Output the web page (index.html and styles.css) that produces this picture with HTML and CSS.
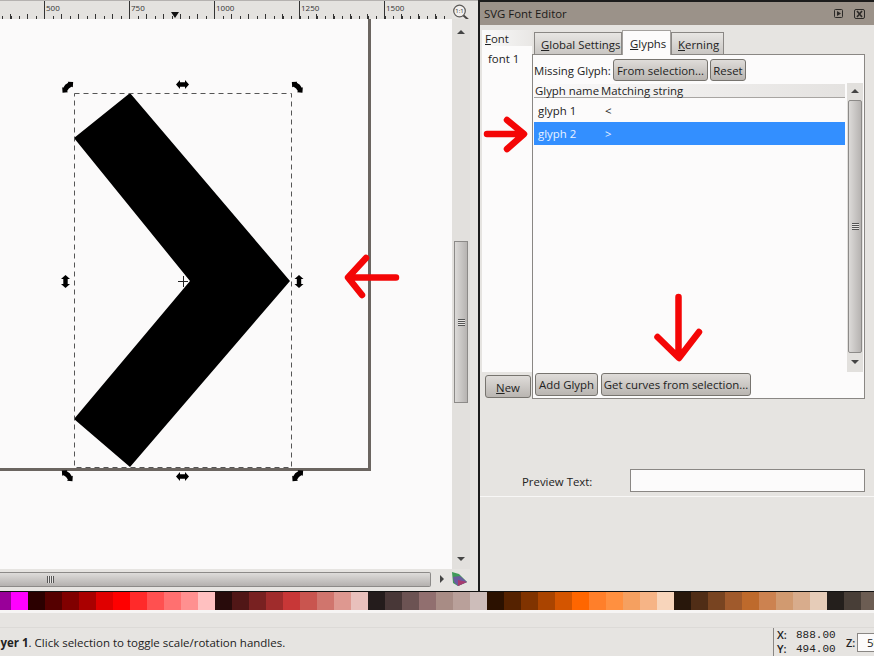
FILE: index.html

```html
<!DOCTYPE html>
<html lang="en">
<head>
  <meta charset="UTF-8" />
  <title>SVG Font Editor</title>
  <link rel="stylesheet" href="styles.css">
</head>
<body>
  <div class="app">
    <div class="work">
      <div class="left">
        <div class="ruler-row">
          <div class="ruler">
            <span class="ruler-lead"></span>
            <span class="ruler-cell">500</span>
            <span class="ruler-cell">750</span>
            <span class="ruler-cell">1000</span>
            <span class="ruler-cell">1250</span>
            <span class="ruler-cell">1500</span>
            <i class="ruler-mark"></i>
          </div>
          <svg class="zoom-icon" width="26" height="19" viewBox="0 0 26 19">
            <circle cx="7.5" cy="10" r="5.8" fill="#f2f0ee" stroke="#5c5a58" stroke-width="1.2"/>
            <path d="M11.5 14.5 L16 18.5" stroke="#4a4846" stroke-width="2"/>
            <text x="7.5" y="12.2" text-anchor="middle" class="zoom-text">1:1</text>
          </svg>
        </div>
        <div class="canvas-row">
          <div class="canvas">
            <svg width="452" height="550" viewBox="0 19 452 550">
              <defs>
                <path id="handle" d="M-6.5 0 L-2.5 -4.5 L-2.5 -2.2 L2.5 -2.2 L2.5 -4.5 L6.5 0 L2.5 4.5 L2.5 2.2 L-2.5 2.2 L-2.5 4.5Z" fill="#000"/>
                <path id="corner" d="M-7.5 0.5 L-4 -3.5 L-3.5 -2.5 Q0 -4 3.5 -2.5 L4 -3.5 L7.5 0.5 L3.5 4 L3 2.5 Q0 1.5 -3 2.5 L-3.5 4Z" fill="#000"/>
              </defs>
              <path d="M0 469.5 H369.5 V19" fill="none" stroke="#6b6560" stroke-width="3"/>
              <polygon points="130,93 290,281 130,467 74,419 190,281 74,138" fill="#000"/>
              <rect x="74.5" y="93.5" width="217" height="374" fill="none" stroke="#555" stroke-dasharray="5 4"/>
              <path d="M178 281.5 H188 M183.5 276 V287" stroke="#222" stroke-width="1"/>
              <use href="#corner" transform="translate(67.5 87) rotate(-45)"/>
              <use href="#handle" transform="translate(182.5 84.5)"/>
              <use href="#corner" transform="translate(297.5 87) rotate(45)"/>
              <use href="#handle" transform="translate(65.5 281.5) rotate(90)"/>
              <use href="#handle" transform="translate(299 281.5) rotate(90)"/>
              <use href="#corner" transform="translate(67.5 475.5) rotate(45)"/>
              <use href="#handle" transform="translate(182.5 476.5)"/>
              <use href="#corner" transform="translate(297.5 475.5) rotate(-45)"/>
            </svg>
          </div>
          <div class="vscroll canvas-vscroll">
            <i class="tri-up"></i>
            <div class="canvas-vthumb"><i class="grip-h"></i></div>
            <i class="tri-down"></i>
          </div>
        </div>
        <div class="hscroll-row">
          <div class="hthumb"><i class="grip-v"></i></div>
          <i class="tri-right"></i>
          <svg class="wheel" width="17" height="16" viewBox="0 0 17 16">
            <polygon points="1,1 8,3 16,11 7,15 2,12" fill="#3f9a5a"/>
            <polygon points="2,6 9,5 16,11 7,15 3,11" fill="#6b5a9e"/>
            <polygon points="7,9 16,11 7,15" fill="#a83c6e"/>
          </svg>
        </div>
      </div>

      <div class="panel">
        <div class="title">
          <span>SVG Font Editor</span>
          <div class="title-icons">
            <svg width="9" height="9" viewBox="0 0 9 9"><rect x="0.5" y="0.5" width="8" height="8" rx="1" fill="none" stroke="#2c2a28"/><polygon points="3,2 7,4.5 3,7" fill="#2c2a28"/></svg>
            <svg width="11" height="10" viewBox="0 0 11 10"><rect x="0.5" y="0.5" width="10" height="9" rx="1.5" fill="none" stroke="#2c2a28"/><path d="M3 2 L8 8 M8 2 L3 8" stroke="#2c2a28" stroke-width="1.6"/></svg>
          </div>
        </div>

        <div class="editor">
          <div class="font-col">
            <div class="font-head"><u>F</u>ont</div>
            <div class="font-list">font 1</div>
            <button class="btn new-btn"><u>N</u>ew</button>
          </div>

          <div class="tab-col">
            <div class="tabs">
              <span class="tab tab-global"><u>G</u>lobal Settings</span>
              <span class="tab tab-active"><u>G</u>lyphs</span>
              <span class="tab"><u>K</u>erning</span>
            </div>
            <div class="box">
              <div class="missing">
                <span class="missing-label">Missing Glyph:</span>
                <button class="btn from-btn">From selection...</button>
                <button class="btn reset-btn">Reset</button>
              </div>
              <div class="table-wrap">
                <div class="table">
                  <div class="thead">
                    <span class="col-name">Glyph name</span>
                    <span>Matching string</span>
                  </div>
                  <div class="row">
                    <span class="cell-name">glyph 1</span>
                    <span>&lt;</span>
                  </div>
                  <div class="row row-selected">
                    <span class="cell-name">glyph 2</span>
                    <span>&gt;</span>
                  </div>
                </div>
                <div class="vscroll table-vscroll">
                  <i class="tri-up"></i>
                  <div class="table-vthumb"><i class="grip-h"></i></div>
                  <i class="tri-down"></i>
                </div>
              </div>
              <div class="box-buttons">
                <button class="btn add-btn">Add Glyph</button>
                <button class="btn curves-btn">Get curves from selection...</button>
              </div>
            </div>
          </div>
        </div>

        <div class="preview">
          <span class="preview-label">Preview Text:</span>
          <div class="preview-input"></div>
        </div>
        <div class="panel-rest"></div>
      </div>
    </div>

    <div class="palette">
      <i class="swatch swatch-first" style="background:#990099"></i>
      <i class="swatch" style="background:#ff00ff"></i>
      <i class="swatch" style="background:#2b0000"></i>
      <i class="swatch" style="background:#550000"></i>
      <i class="swatch" style="background:#800000"></i>
      <i class="swatch" style="background:#aa0000"></i>
      <i class="swatch" style="background:#e00000"></i>
      <i class="swatch" style="background:#ff0000"></i>
      <i class="swatch" style="background:#ff2a2a"></i>
      <i class="swatch" style="background:#ff5050"></i>
      <i class="swatch" style="background:#ff7070"></i>
      <i class="swatch" style="background:#ff9090"></i>
      <i class="swatch" style="background:#ffc0c0"></i>
      <i class="swatch" style="background:#280b0b"></i>
      <i class="swatch" style="background:#501616"></i>
      <i class="swatch" style="background:#782121"></i>
      <i class="swatch" style="background:#a02c2c"></i>
      <i class="swatch" style="background:#c83737"></i>
      <i class="swatch" style="background:#c9554f"></i>
      <i class="swatch" style="background:#d0756d"></i>
      <i class="swatch" style="background:#de9890"></i>
      <i class="swatch" style="background:#e9c0bc"></i>
      <i class="swatch" style="background:#241c1c"></i>
      <i class="swatch" style="background:#483737"></i>
      <i class="swatch" style="background:#6c5353"></i>
      <i class="swatch" style="background:#916f6f"></i>
      <i class="swatch" style="background:#a88c85"></i>
      <i class="swatch" style="background:#b9a09a"></i>
      <i class="swatch" style="background:#cdbdba"></i>
      <i class="swatch" style="background:#2b1100"></i>
      <i class="swatch" style="background:#552200"></i>
      <i class="swatch" style="background:#803300"></i>
      <i class="swatch" style="background:#aa4400"></i>
      <i class="swatch" style="background:#d45500"></i>
      <i class="swatch" style="background:#ff6600"></i>
      <i class="swatch" style="background:#ff7f2a"></i>
      <i class="swatch" style="background:#ff9040"></i>
      <i class="swatch" style="background:#f5a060"></i>
      <i class="swatch" style="background:#f6b486"></i>
      <i class="swatch" style="background:#f8d5bb"></i>
      <i class="swatch" style="background:#28170b"></i>
      <i class="swatch" style="background:#502d16"></i>
      <i class="swatch" style="background:#784421"></i>
      <i class="swatch" style="background:#a05a2c"></i>
      <i class="swatch" style="background:#be6a2c"></i>
      <i class="swatch" style="background:#cc8250"></i>
      <i class="swatch" style="background:#d19a70"></i>
      <i class="swatch" style="background:#d8ac8c"></i>
      <i class="swatch" style="background:#e6ccb8"></i>
      <i class="swatch" style="background:#241f1c"></i>
      <i class="swatch" style="background:#483e37"></i>
      <i class="swatch" style="background:#6c5d53"></i>
    </div>
    <div class="palette-edge"></div>

    <div class="status">
      <div class="status-text"><b>Layer 1</b>. Click selection to toggle scale/rotation handles.</div>
      <div class="coords">
        <div class="coord-labels"><span>X:</span><span>Y:</span></div>
        <div class="coord-values"><span>888.00</span><span>494.00</span></div>
        <span class="zoom-label">Z:</span>
        <div class="zoom-field">50%</div>
      </div>
    </div>
  </div>

  <svg class="annotations" width="874" height="656" viewBox="0 0 874 656">
    <path d="M396 277.5 H349 M366 258 L348 277.5 L362 295" />
    <path d="M487 134 H522 M507 120 L524 134 L507 149" />
    <path d="M678.5 297 V356 M657.5 337 L679 358 L699 332" />
  </svg>
</body>
</html>
```

FILE: styles.css

```css
* {
  box-sizing: border-box;
}
html, body {
  margin: 0;
  height: 100%;
  overflow: hidden;
}
body {
  font-family: "Open Sans", "Noto Sans", sans-serif;
  font-size: 11.4px;
  color: #222;
  background-color: #e6e4e1;
  position: relative;
}
.app {
  width: 874px;
  height: 656px;
  display: flex;
  flex-direction: column;
}
.work {
  height: 591px;
  display: flex;
}

/* left side: ruler, canvas, scrollbars */
.left {
  width: 478px;
  display: flex;
  flex-direction: column;
}
.ruler-row {
  height: 19px;
  display: flex;
  border-top: 1px solid #b5b2b0;
}
.ruler {
  width: 452px;
  position: relative;
  display: flex;
  overflow: hidden;
  background-color: #e4e2df;
  background-image:
    repeating-linear-gradient(90deg, #333 0 1px, transparent 1px 17px),
    repeating-linear-gradient(90deg, #333 0 1px, transparent 1px 8.5px);
  background-size: 100% 5px, 100% 3px;
  background-position: 10px 13px, 1.5px 15px;
  background-repeat: no-repeat;
}
.ruler-lead {
  width: 44px;
  flex: none;
}
.ruler-cell {
  width: 85px;
  flex: none;
  height: 18px;
  border-left: 1px solid #333;
  padding-left: 1px;
  font-size: 8px;
  line-height: 13px;
  color: #333;
}
.ruler-mark {
  position: absolute;
  left: 171px;
  top: 11px;
  border-left: 4px solid transparent;
  border-right: 4px solid transparent;
  border-top: 6px solid #111;
}
.zoom-icon {
  flex: none;
}
.zoom-text {
  font-size: 6px;
  fill: #333;
}
.canvas-row {
  flex: 1;
  display: flex;
  min-height: 0;
}
.canvas {
  width: 452px;
  background-color: #fbfafa;
  overflow: hidden;
}
.canvas svg {
  display: block;
}
.vscroll {
  display: flex;
  flex-direction: column;
  align-items: center;
  background-color: #e2e0dd;
}
.canvas-vscroll {
  width: 18px;
  margin-right: 8px;
  padding-top: 11px;
}
.canvas-vthumb {
  width: 14px;
  height: 162px;
  margin-top: 207px;
  margin-bottom: 154px;
  border: 1px solid #8c8a88;
  background: linear-gradient(90deg, #dcdad8, #b6b3b1);
  display: flex;
  align-items: center;
  justify-content: center;
}
.grip-h {
  width: 7px;
  height: 7px;
  background: repeating-linear-gradient(180deg, #555 0 1px, #e6e4e2 1px 2px);
}
.grip-v {
  width: 7px;
  height: 7px;
  background: repeating-linear-gradient(90deg, #555 0 1px, #e6e4e2 1px 2px);
}
.tri-up, .tri-down, .tri-right {
  display: block;
  flex: none;
  width: 0;
  height: 0;
  border: 4px solid transparent;
}
.tri-up {
  border-bottom: 4px solid #444;
  border-top-width: 0;
}
.tri-down {
  border-top: 4px solid #444;
  border-bottom-width: 0;
}
.tri-right {
  border-left: 4px solid #444;
  border-right-width: 0;
}
.hscroll-row {
  height: 22px;
  display: flex;
  align-items: center;
  background-color: #e6e4e1;
  padding: 0 10px 2px 0;
}
.hthumb {
  width: 431px;
  height: 15px;
  margin-right: 9px;
  border: 1px solid #8c8a88;
  border-left: 0;
  border-radius: 0 2px 2px 0;
  background: linear-gradient(180deg, #dedcda, #b4b1af);
  display: flex;
  align-items: center;
  padding-left: 47px;
}
.tri-right {
  margin-right: 7px;
}
.wheel {
  flex: none;
}

/* right side: dialog */
.panel {
  width: 396px;
  border-left: 2px solid #1c1c1c;
  border-top: 2px solid #1c1c1c;
  display: flex;
  flex-direction: column;
}
.title {
  height: 23px;
  flex: none;
  background-color: #9b9289;
  color: #1c1a18;
  display: flex;
  align-items: center;
  justify-content: space-between;
  padding: 0 9px 0 4px;
}
.title-icons {
  display: flex;
  align-items: center;
  gap: 11px;
}
.title-icons svg {
  display: block;
}
.editor {
  display: flex;
  padding: 5px 9px 0 2px;
}
.font-col {
  width: 50px;
  flex: none;
}
.font-head {
  height: 16px;
  line-height: 18px;
  padding-left: 3px;
  background: linear-gradient(90deg, #fafafa, #e9e7e5);
}
.font-list {
  height: 326px;
  background-color: #fcfbfb;
  padding: 5px 0 0 6px;
  line-height: 16px;
}
.btn {
  font: inherit;
  color: #222;
  height: 23px;
  padding: 0;
  border: 1px solid #77746f;
  border-radius: 3px;
  background: linear-gradient(180deg, #dfdcd9, #b9b5b1);
  white-space: nowrap;
}
.new-btn {
  display: block;
  width: 46px;
  margin: 3px 0 0 3px;
  padding-top: 2px;
}
.tab-col {
  width: 333px;
  flex: none;
}
.tabs {
  height: 24px;
  display: flex;
  align-items: flex-end;
  padding-left: 2px;
}
.tab {
  height: 22px;
  line-height: 24px;
  padding: 0 4px 0 6px;
  border: 1px solid #8a8784;
  border-bottom: 0;
  background: linear-gradient(180deg, #e8e6e3, #c9c6c3);
  white-space: nowrap;
  overflow: hidden;
}
.tab-global {
  width: 88px;
}
.tab-active {
  line-height: 26px;
  width: 49px;
  padding-left: 7px;
  background: #fcfbfb;
  position: relative;
  z-index: 1;
  margin-bottom: -1px;
  height: 25px;
  border-color: #a3a09d;
}
.box {
  height: 345px;
  border: 1px solid #8a8784;
  background-color: #fcfbfb;
  display: flex;
  flex-direction: column;
  padding-top: 4px;
}
.missing {
  height: 22px;
  display: flex;
  align-items: center;
  padding-left: 1px;
}
.missing-label {
  width: 79px;
  flex: none;
  white-space: nowrap;
}
.from-btn {
  width: 95px;
  height: 22px;
  margin-right: 2px;
}
.reset-btn {
  width: 36px;
  height: 22px;
}
.table-wrap {
  height: 289px;
  margin-top: 2px;
  display: flex;
}
.table {
  width: 312px;
  padding-left: 1px;
}
.thead {
  height: 14px;
  margin-top: 1px;
  margin-bottom: 1px;
  line-height: 14px;
  display: flex;
  background: linear-gradient(90deg, #fbfafa, #e4e2e0);
  border-bottom: 1px solid #a8a5a2;
  padding-left: 1px;
  white-space: nowrap;
}
.col-name {
  width: 66px;
  flex: none;
}
.row {
  height: 23px;
  line-height: 23px;
  display: flex;
  padding-left: 4px;
}
.cell-name {
  width: 67px;
  flex: none;
}
.row-selected {
  background-color: #338fff;
  color: #e8f2ff;
}
.table-vscroll {
  width: 16px;
  margin-left: 2px;
  padding-top: 6px;
}
.table-vthumb {
  width: 14px;
  height: 253px;
  margin-top: 7px;
  margin-bottom: 7px;
  border: 1px solid #8c8a88;
  border-radius: 2px;
  background: linear-gradient(90deg, #dcdad8, #b6b3b1);
  display: flex;
  align-items: center;
  justify-content: center;
}
.box-buttons {
  margin-top: 1px;
  display: flex;
  gap: 3px;
  padding-left: 2px;
}
.add-btn {
  width: 63px;
}
.curves-btn {
  width: 150px;
}
.preview {
  margin-top: 70px;
  padding: 0 9px 0 42px;
  display: flex;
  align-items: center;
}
.preview-label {
  width: 108px;
  flex: none;
  padding-top: 1px;
}
.preview-input {
  width: 235px;
  height: 23px;
  border: 1px solid #8a8784;
  background-color: #fcfbfb;
}
.panel-rest {
  flex: 1;
  margin-top: 4px;
  border-top: 1px solid #f8f7f6;
}

/* colour palette */
.palette {
  height: 19px;
  flex: none;
  display: flex;
  border-top: 1px solid #111;
  overflow: hidden;
}
.swatch {
  display: block;
  width: 17px;
  flex: none;
}
.swatch-first {
  width: 11px;
}
.palette-edge {
  height: 3px;
  flex: none;
  background-color: #f6f5f4;
}

/* status bar */
.status {
  flex: 1;
  min-height: 0;
  display: flex;
  justify-content: space-between;
  align-items: flex-end;
  padding-top: 15px;
  overflow: hidden;
  background: linear-gradient(180deg, #e6e4e1 0 14px, #dcdad7 14px 15px, #e6e4e1 15px);
}
.status > * {
  height: 100%;
}
.status-text {
  margin-left: -13px;
  font-size: 11.5px;
  line-height: 29px;
  white-space: nowrap;
}
.coords {
  width: 101px;
  flex: none;
  display: flex;
  align-items: center;
  border-left: 1px solid #8a8784;
  padding-left: 3px;
}
.coord-labels, .coord-values {
  display: flex;
  flex-direction: column;
  line-height: 14px;
}
.coord-labels {
  width: 19px;
  flex: none;
  font-weight: 600;
  font-size: 11px;
}
.coord-values {
  width: 50px;
  flex: none;
  font-family: "Liberation Mono", monospace;
  font-size: 11px;
}
.zoom-label {
  width: 11px;
  flex: none;
  font-weight: 600;
  font-size: 11px;
}
.zoom-field {
  width: 40px;
  flex: none;
  height: 19px;
  line-height: 17px;
  border: 1px solid #8a8784;
  background-color: #fcfbfb;
  padding-left: 9px;
}

/* red arrows drawn on top of the screenshot */
.annotations {
  position: absolute;
  left: 0;
  top: 0;
  pointer-events: none;
}
.annotations path {
  fill: none;
  stroke: #f40606;
  stroke-width: 6.5;
  stroke-linecap: round;
  stroke-linejoin: round;
}
```
